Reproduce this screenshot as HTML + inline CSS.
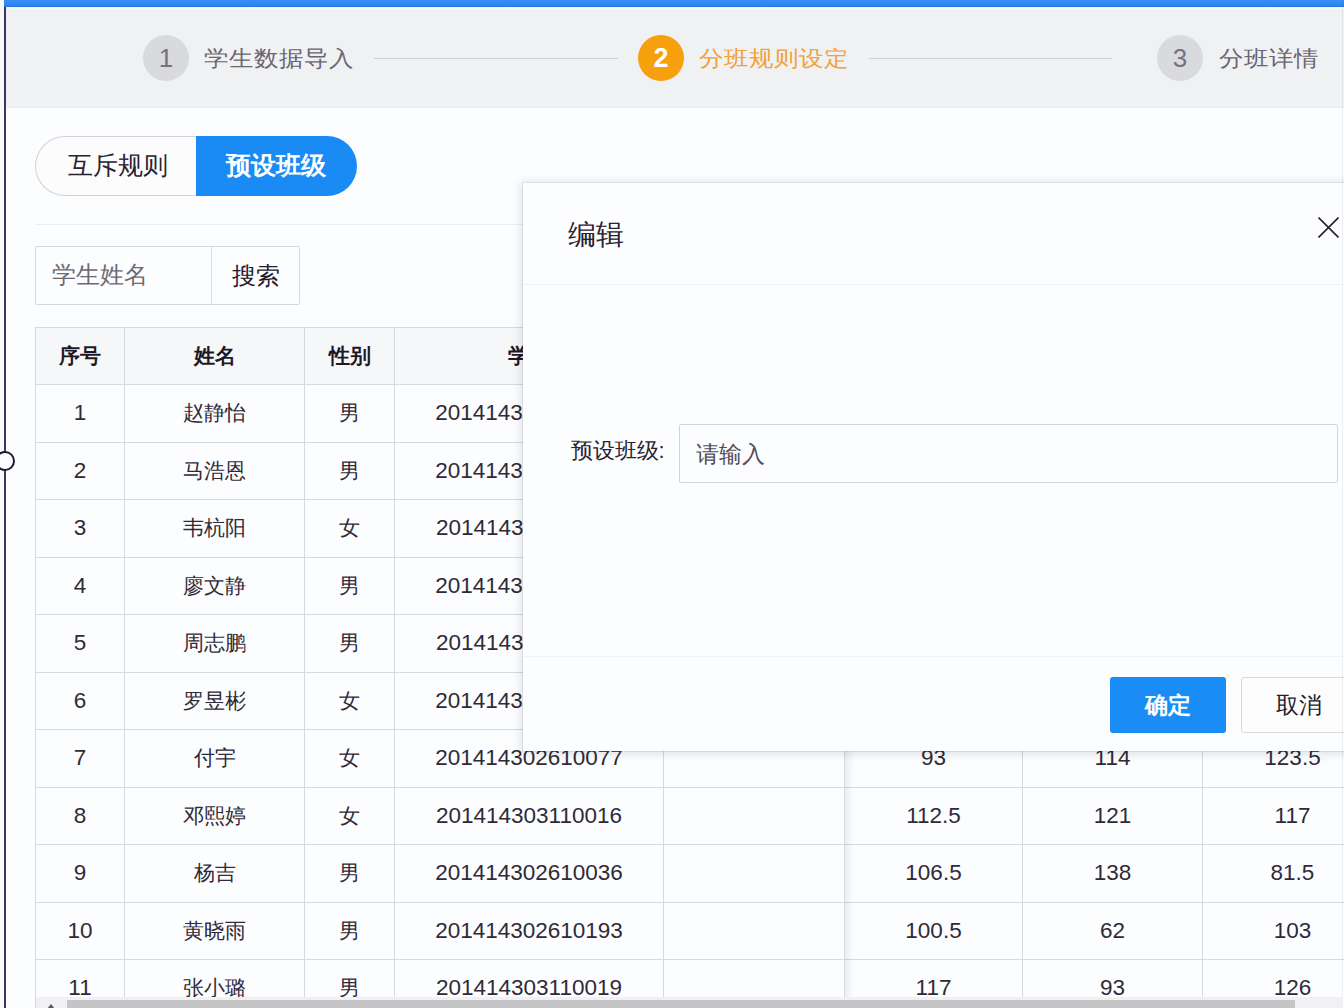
<!DOCTYPE html>
<html><head><meta charset="utf-8">
<style>
*{box-sizing:border-box;margin:0;padding:0}
html,body{width:1344px;height:1008px;overflow:hidden;background:#fcfdfe;font-family:"Liberation Sans",sans-serif;color:#2b2433;position:relative}
.abs{position:absolute}
#leftstrip{left:0;top:0;width:4px;height:1008px;background:#f8faf9}
#vline{left:4px;top:7px;width:2px;height:1001px;background:#40345a}
#handle{left:-5px;top:450.5px;width:20px;height:20px;border:2.2px solid #24182f;border-radius:50%;background:#fcfdfe}
#rline{left:1342px;top:0;width:1px;height:1008px;background:rgba(0,0,20,0.05)}
#topbar{left:4px;top:0;width:1340px;height:7px;background:linear-gradient(#3a8ff5,#2f87f2 70%,#2274dc)}
#topwhite{left:6px;top:7px;width:1338px;height:2px;background:#f4f7fb}
#steps{left:6px;top:9px;width:1338px;height:99px;background:#f0f1f3;border-bottom:1px solid #ebecef}
.circ{width:46px;height:46px;border-radius:50%;background:#d9dadd;color:#77727c;font-size:26px;text-align:center;line-height:46px}
.circ.on{background:#f6a00e;color:#fff}
.stxt{font-size:24.5px;color:#6b6570;line-height:30px;white-space:nowrap;transform:scaleY(0.9);transform-origin:50% 60%}
.stxt.on{color:#f3a036}
.sline{height:1px;background:#cfd0d4}
#tabs{left:35px;top:136px;width:322px;height:60px}
#tab1{left:0;top:0;width:163px;height:60px;border:1px solid #d2d3d9;border-right:none;border-radius:30px 0 0 30px;background:#fcfcfd;font-size:24.5px;line-height:58px;text-align:center;color:#2a2232;padding-left:1px}
#tab2{left:161px;top:0;width:161px;height:60px;border-radius:0 30px 30px 0;background:#1a8bf5;color:#fff;font-size:24.5px;font-weight:bold;line-height:60px;text-align:center;padding-right:2px}
#divider{left:36px;top:224px;width:1308px;height:1px;background:#eceef1}
#search{left:35px;top:246px;width:265px;height:59px;border:1px solid #d6d7dc;border-radius:2px;background:#fcfdfe}
#search .ph{left:16px;top:0;line-height:57px;font-size:23.5px;color:#6e6873}
#search .sep{left:175px;top:0;width:1px;height:57px;background:#dcdde1}
#search .btn{left:176px;top:0;width:87px;line-height:57px;font-size:24px;text-align:center;color:#231b2b}
table{position:absolute;left:35px;top:326.5px;border-collapse:collapse;table-layout:fixed;width:1347px}
td,th{border:1px solid #d8d9de;height:57.5px;text-align:center;font-size:22.5px;color:#2a2232;font-weight:normal;white-space:nowrap;overflow:hidden;padding:0}
th{background:#f6f7f9;font-weight:bold;font-size:20.5px;color:#1f1826}
td{background:#fcfdfe;color:#302a38}
td:nth-child(2),td:nth-child(3){font-size:21px}
#fixshadow{left:845px;top:327px;width:9px;height:672px;background:linear-gradient(to right,rgba(20,30,40,0.07),rgba(20,30,40,0))}
#scroll{left:36px;top:997px;width:1306px;height:11px;background:#f1f1f3}
#sarrow{left:47px;top:1004px;width:0;height:0;border-left:4px solid transparent;border-right:4px solid transparent;border-bottom:5px solid #5a5a5e}
#thumb{left:66.5px;top:999.5px;width:1228px;height:8.5px;background:#c5c5c8}
#modal{left:522.5px;top:182.5px;width:830px;height:568px;background:#fcfdfe;box-shadow:0 0 0 1px rgba(20,30,40,0.07),0 1px 10px 1px rgba(20,30,40,0.15)}
#mtitle{left:45px;top:32px;font-size:28px;line-height:40px;color:#2a2232}
#mclose{left:795px;top:34px;width:21px;height:21px}
#mhdiv{left:0;top:101px;width:820px;height:1px;background:#f0f1f4}
#mlabel{left:48px;top:251px;font-size:22px;line-height:34px;color:#2a2232}
#minput{left:156px;top:241px;width:659px;height:59px;border:1px solid #d3d4d9;border-radius:2px;background:#fcfdfe}
#minput span{position:absolute;left:16px;top:0;line-height:59px;font-size:23px;color:#554d5c}
#mfdiv{left:0;top:473px;width:820px;height:1px;background:#f1f2f5}
#ok{left:587px;top:494px;width:116px;height:56px;border-radius:3px;background:#1a8cf6;color:#fff;font-size:23px;font-weight:bold;line-height:56px;text-align:center}
#cancel{left:718px;top:494px;width:110px;height:56px;border-radius:3px;border:1px solid #d9dade;background:#fdfdfe;color:#231b2b;font-size:23px;line-height:54px;padding-left:34px}
</style></head><body>
<div id="leftstrip" class="abs"></div>
<div id="topbar" class="abs"></div>
<div id="topwhite" class="abs"></div>
<div id="steps" class="abs"></div>
<div class="abs circ" style="left:143px;top:35px">1</div>
<div class="abs stxt" style="left:204px;top:43px">学生数据导入</div>
<div class="abs sline" style="left:374px;top:58px;width:244px"></div>
<div class="abs circ on" style="left:638px;top:34.5px;font-size:27px;font-weight:bold">2</div>
<div class="abs stxt on" style="left:699px;top:43px">分班规则设定</div>
<div class="abs sline" style="left:869px;top:58px;width:243px"></div>
<div class="abs circ" style="left:1157px;top:35px">3</div>
<div class="abs stxt" style="left:1219px;top:43px">分班详情</div>

<div id="tabs" class="abs"><div id="tab1" class="abs">互斥规则</div><div id="tab2" class="abs">预设班级</div></div>
<div id="divider" class="abs"></div>
<div id="search" class="abs"><div class="abs ph">学生姓名</div><div class="abs sep"></div><div class="abs btn">搜索</div></div>

<table>
<colgroup><col style="width:89px"><col style="width:180px"><col style="width:90px"><col style="width:269px"><col style="width:181px"><col style="width:178px"><col style="width:180px"><col style="width:180px"></colgroup>
<tr><th>序号</th><th>姓名</th><th>性别</th><th>学号</th><th>班级</th><th>语文</th><th>数学</th><th>英语</th></tr>
<tr><td>1</td><td>赵静怡</td><td>男</td><td>201414302610012</td><td></td><td>98</td><td>105</td><td>110</td></tr>
<tr><td>2</td><td>马浩恩</td><td>男</td><td>201414302610025</td><td></td><td>101</td><td>96</td><td>88</td></tr>
<tr><td>3</td><td>韦杭阳</td><td>女</td><td>201414303110031</td><td></td><td>110.5</td><td>120</td><td>115</td></tr>
<tr><td>4</td><td>廖文静</td><td>男</td><td>201414302610044</td><td></td><td>95</td><td>130</td><td>99.5</td></tr>
<tr><td>5</td><td>周志鹏</td><td>男</td><td>201414303110052</td><td></td><td>104</td><td>88</td><td>107</td></tr>
<tr><td>6</td><td>罗昱彬</td><td>女</td><td>201414302610063</td><td></td><td>99.5</td><td>112</td><td>120</td></tr>
<tr><td>7</td><td>付宇</td><td>女</td><td>201414302610077</td><td></td><td>93</td><td>114</td><td>123.5</td></tr>
<tr><td>8</td><td>邓熙婷</td><td>女</td><td>201414303110016</td><td></td><td>112.5</td><td>121</td><td>117</td></tr>
<tr><td>9</td><td>杨吉</td><td>男</td><td>201414302610036</td><td></td><td>106.5</td><td>138</td><td>81.5</td></tr>
<tr><td>10</td><td>黄晓雨</td><td>男</td><td>201414302610193</td><td></td><td>100.5</td><td>62</td><td>103</td></tr>
<tr><td>11</td><td>张小璐</td><td>男</td><td>201414303110019</td><td></td><td>117</td><td>93</td><td>126</td></tr>
</table>
<div id="fixshadow" class="abs"></div>
<div id="scroll" class="abs"></div>
<div id="thumb" class="abs"></div>
<div id="sarrow" class="abs"></div>

<div id="modal" class="abs">
  <div id="mtitle" class="abs">编辑</div>
  <svg id="mclose" class="abs" viewBox="0 0 21 21"><path d="M0.5 0.5L20.5 20.5M20.5 0.5L0.5 20.5" stroke="#2a2035" stroke-width="1.6" fill="none"/></svg>
  <div id="mhdiv" class="abs"></div>
  <div id="mlabel" class="abs">预设班级:</div>
  <div id="minput" class="abs"><span>请输入</span></div>
  <div id="mfdiv" class="abs"></div>
  <div id="ok" class="abs">确定</div>
  <div id="cancel" class="abs">取消</div>
</div>
<div id="vline" class="abs"></div>
<div id="handle" class="abs"></div>
<div id="rline" class="abs"></div>
</body></html>
